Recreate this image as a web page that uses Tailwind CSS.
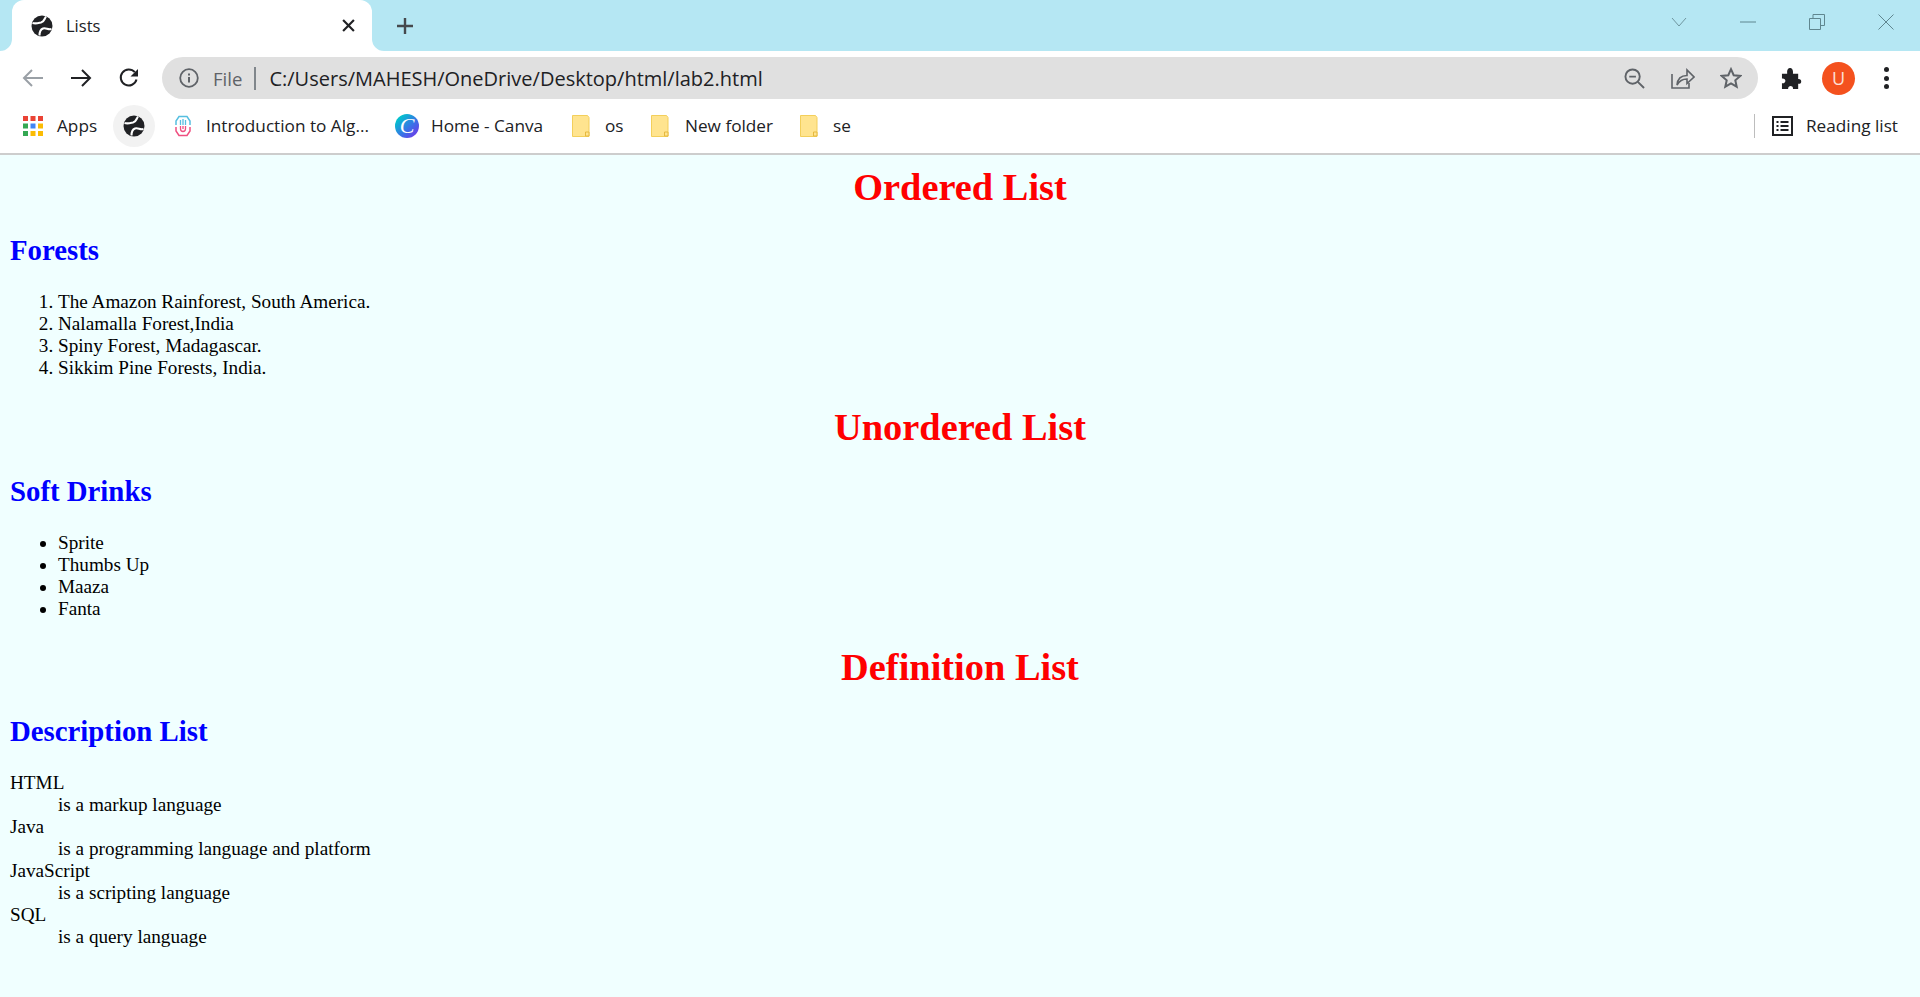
<!DOCTYPE html>
<html lang="en">
<head>
<meta charset="utf-8">
<title>Lists</title>
<script src="https://cdn.jsdelivr.net/npm/@tailwindcss/browser@4"></script>
</head>
<body class="bg-[#f0ffff] h-[997px] overflow-hidden font-['Liberation_Serif',serif] text-black">
<header class="font-['Open_Sans',sans-serif] text-[#202124]">
  <div class="h-[51px] bg-[#b5e7f3] flex items-stretch relative">
    <div class="ml-[12px] w-[360px] bg-white rounded-t-[12px] flex items-center relative pl-[19px] pr-[17px]">
      <svg class="absolute -left-[12px] bottom-0 w-[12px] h-[12px]" viewBox="0 0 12 12"><path d="M12 0v12H0A12 12 0 0 0 12 0z" fill="#fff"/></svg>
      <svg class="absolute -right-[12px] bottom-0 w-[12px] h-[12px]" viewBox="0 0 12 12"><path d="M0 0v12h12A12 12 0 0 1 0 0z" fill="#fff"/></svg>
      <svg class="w-[22px] h-[22px]" viewBox="0 0 22 22"><circle cx="11" cy="11" r="10.500" fill="#202124"/><path d="M15 1.500C13 4.500 13.500 6.500 10 7.500 7.500 8 5 9 1.500 8" fill="none" stroke="#fff" stroke-width="2.100"/><path d="M8.500 20.500C8.500 17 9.500 14.500 12 13.500 15 12.500 17 15 20.500 14" fill="none" stroke="#fff" stroke-width="2.100"/></svg>
      <span class="ml-[13px] pt-[2px] text-[16.500px]">Lists</span>
      <svg class="ml-auto w-[13px] h-[13px]" viewBox="0 0 12 12"><path d="M1 1l10 10M11 1L1 11" stroke="#202124" stroke-width="2"/></svg>
    </div>
    <svg class="ml-[24px] self-center w-[18px] h-[18px]" viewBox="0 0 18 18"><path d="M9 1v16M1 9h16" stroke="#45494d" stroke-width="2.400"/></svg>
    <div class="ml-auto flex items-center pb-[7px] pr-[26px]">
      <svg class="w-[16px] h-[10px]" viewBox="0 0 16 10"><path d="M1 1l7 8 7-8" fill="none" stroke="#6f969f" stroke-width="1"/></svg>
      <svg class="ml-[53px] w-[16px] h-[2px]" viewBox="0 0 16 2"><path d="M0 1h16" stroke="#5f868f" stroke-width="1"/></svg>
      <svg class="ml-[53px] w-[16px] h-[16px]" viewBox="0 0 16 16"><path d="M.5 4.500h11v11H.5zM4 4.500V.500h11.500v11h-4" fill="none" stroke="#5f868f" stroke-width="1"/></svg>
      <svg class="ml-[53px] w-[16px] h-[16px]" viewBox="0 0 16 16"><path d="M.5.500l15 15M15.500.500l-15 15" stroke="#5f868f" stroke-width="1"/></svg>
    </div>
  </div>
  <div class="h-[48px] bg-white flex items-center pt-[6px]">
    <svg class="ml-[22px] w-[22px] h-[20px]" viewBox="0 0 22 20"><path d="M21 10H2M10 2l-8 8 8 8" fill="none" stroke="#9aa0a6" stroke-width="2"/></svg>
    <svg class="ml-[26px] w-[22px] h-[20px]" viewBox="0 0 22 20"><path d="M1 10h19M12 2l8 8-8 8" fill="none" stroke="#202124" stroke-width="2"/></svg>
    <svg class="ml-[26px] w-[22px] h-[22px]" viewBox="0 0 22 22"><path d="M18.500 12.500A8 8 0 1 1 16.800 5.200" fill="none" stroke="#202124" stroke-width="2"/><path d="M20 2v7.500h-7.500z" fill="#202124"/></svg>
    <div class="ml-[22px] w-[1596px] h-[42px] rounded-full bg-[#e0e0e0] flex items-center pl-[17px] pr-[16px]">
      <svg class="w-[20px] h-[20px]" viewBox="0 0 20 20"><circle cx="10" cy="10" r="8.800" fill="none" stroke="#5f6368" stroke-width="1.800"/><path d="M10 9v5.500M10 5.500v2" stroke="#5f6368" stroke-width="2"/></svg>
      <span class="ml-[14px] pt-[2px] text-[18.600px] text-[#5f6368]">File</span>
      <span class="ml-[12px] w-[2px] h-[23px] bg-[#80868b]"></span>
      <span class="ml-[13px] pt-[2px] text-[20px] text-[#202124] leading-none">C:/Users/MAHESH/OneDrive/Desktop/html/lab2.html</span>
      <svg class="ml-auto w-[21px] h-[21px]" viewBox="0 0 22 22"><circle cx="9" cy="9" r="7.500" fill="none" stroke="#5f6368" stroke-width="2"/><path d="M5.500 9h7M14.500 14.500l6.500 6.500" stroke="#5f6368" stroke-width="2"/></svg>
      <svg class="ml-[26px] w-[24px] h-[22px]" viewBox="0 0 24 22"><path d="M1 7v14h17v-5" fill="none" stroke="#5f6368" stroke-width="1.600"/><path d="M6 18c.5-6 4-9.500 10-9.500V3l7 7-7 6.500V12c-4 0-7.500 1.500-10 6z" fill="none" stroke="#5f6368" stroke-width="1.600"/></svg>
      <svg class="ml-[25px] w-[22px] h-[22px]" viewBox="0 0 22 22"><path d="M11 2.200l2.700 6 6.500.7-4.900 4.400 1.400 6.400L11 16.400l-5.700 3.300 1.400-6.400L1.800 8.900l6.500-.7z" fill="none" stroke="#5f6368" stroke-width="2"/></svg>
    </div>
    <svg class="ml-[23px] w-[21px] h-[21px]" viewBox="0 0 22 22"><path d="M1 6h5.500C6 1 8 0 9.500 0S13 1 12.500 6H18v5.500c4.500-.5 4 6 0 5V22h-5.500c.8-4-5.500-4.500-5 0H1v-6c4 1 5.500-5.500 0-5z" fill="#202124"/></svg>
    <div class="ml-[20px] w-[33px] h-[33px] rounded-full bg-[#f4511e] text-[#fde0d6] text-[18px] flex items-center justify-center">U</div>
    <div class="ml-[29px] flex flex-col gap-[3.500px]"><i class="block w-[5px] h-[5px] rounded-full bg-[#202124]"></i><i class="block w-[5px] h-[5px] rounded-full bg-[#202124]"></i><i class="block w-[5px] h-[5px] rounded-full bg-[#202124]"></i></div>
  </div>
  <div class="h-[54px] bg-white flex items-center text-[17.200px] pb-[1px]">
    <svg class="ml-[23px] w-[20px] h-[20px]" viewBox="0 0 20 20"><g fill="#ea4335"><rect width="5" height="5"/><rect x="7.500" width="5" height="5"/><rect x="15" width="5" height="5"/></g><g fill="#34a853"><rect y="7.500" width="5" height="5"/><rect y="15" width="5" height="5"/></g><rect x="7.500" y="7.500" width="5" height="5" fill="#4285f4"/><rect x="15" y="7.500" width="5" height="5" fill="#fbbc04"/><rect x="7.500" y="15" width="5" height="5" fill="#fbbc04"/><rect x="15" y="15" width="5" height="5" fill="#fbbc04"/></svg>
    <span class="ml-[14px] w-[41px]">Apps</span>
    <div class="ml-[15px] w-[42px] h-[42px] rounded-full bg-[#f2f2f2] flex items-center justify-center">
      <svg class="w-[22px] h-[22px]" viewBox="0 0 22 22"><circle cx="11" cy="11" r="10.500" fill="#202124"/><path d="M15 1.500C13 4.500 13.500 6.500 10 7.500 7.500 8 5 9 1.500 8" fill="none" stroke="#fff" stroke-width="2.100"/><path d="M8.500 20.500C8.500 17 9.500 14.500 12 13.500 15 12.500 17 15 20.500 14" fill="none" stroke="#fff" stroke-width="2.100"/></svg>
    </div>
    <svg class="ml-[19px] w-[18px] h-[22px]" viewBox="0 0 18 22"><path d="M2 10V6l3-4.500h8L16 6v4" fill="none" stroke="#56bfe0" stroke-width="1.500"/><path d="M2 12v4l3 4.500h8l3-4.500v-4" fill="none" stroke="#ef4f80" stroke-width="1.500"/><path d="M6.500 5v5M11.500 5v5M9 4v6" fill="none" stroke="#56bfe0" stroke-width="1.300"/><path d="M6.500 11v3c0 3.300 5 3.300 5 0v-3M9 11v3" fill="none" stroke="#ef4f80" stroke-width="1.300"/></svg>
    <span class="ml-[14px] w-[164px] whitespace-nowrap">Introduction to Alg...</span>
    <div class="ml-[25px] w-[24px] h-[24px] rounded-full bg-[linear-gradient(135deg,#00c4cc_15%,#3d6ee8_60%,#7d2ae8)] flex items-center justify-center text-white font-['Liberation_Serif',serif] italic text-[22px] leading-none">C</div>
    <span class="ml-[12px] w-[113px] whitespace-nowrap">Home - Canva</span>
    <svg class="ml-[28px] w-[18px] h-[22px]" viewBox="0 0 18 22"><path d="M.5.500h15l1.500 2v19H.5z" fill="#ffe48f" stroke="#f3cf5b"/><path d="M13.500 21v-4h3.500v4z" fill="#ffe48f" stroke="#e6b93f"/></svg>
    <span class="ml-[15px] w-[17px]">os</span>
    <svg class="ml-[29px] w-[18px] h-[22px]" viewBox="0 0 18 22"><path d="M.5.500h15l1.500 2v19H.5z" fill="#ffe48f" stroke="#f3cf5b"/><path d="M13.500 21v-4h3.500v4z" fill="#ffe48f" stroke="#e6b93f"/></svg>
    <span class="ml-[16px] w-[87px] whitespace-nowrap">New folder</span>
    <svg class="ml-[28px] w-[18px] h-[22px]" viewBox="0 0 18 22"><path d="M.5.500h15l1.500 2v19H.5z" fill="#ffe48f" stroke="#f3cf5b"/><path d="M13.500 21v-4h3.500v4z" fill="#ffe48f" stroke="#e6b93f"/></svg>
    <span class="ml-[15px]">se</span>
    <span class="ml-auto w-[1px] h-[24px] bg-[#bdbdbd]"></span>
    <svg class="ml-[17px] w-[21px] h-[20px]" viewBox="0 0 21 20"><rect x="1" y="1" width="19" height="18" fill="none" stroke="#202124" stroke-width="2"/><path d="M4.500 6h2M8.500 6h8M4.500 10h2M8.500 10h8M4.500 14h2M8.500 14h8" stroke="#202124" stroke-width="2"/></svg>
    <span class="ml-[13px] mr-[22px] whitespace-nowrap">Reading list</span>
  </div>
  <div class="h-[2px] bg-[#cdcdcd]"></div>
</header>
<main class="px-[10px] pt-[10px]">
  <h1 class="text-[38.400px] leading-[44px] font-bold text-[#ff0000] text-center mb-[25px]">Ordered List</h1>
  <h2 class="text-[28.800px] leading-[33px] font-bold text-[#0000ff] mb-[24px]">Forests</h2>
  <ol class="list-decimal pl-[48px] text-[19.200px] leading-[22px]">
    <li>The Amazon Rainforest, South America.</li>
    <li>Nalamalla Forest,India</li>
    <li>Spiny Forest, Madagascar.</li>
    <li>Sikkim Pine Forests, India.</li>
  </ol>
  <h1 class="mt-[26px] text-[38.400px] leading-[44px] font-bold text-[#ff0000] text-center mb-[26px]">Unordered List</h1>
  <h2 class="text-[28.800px] leading-[33px] font-bold text-[#0000ff] mb-[24px]">Soft Drinks</h2>
  <ul class="list-disc pl-[48px] text-[19.200px] leading-[22px]">
    <li>Sprite</li>
    <li>Thumbs Up</li>
    <li>Maaza</li>
    <li>Fanta</li>
  </ul>
  <h1 class="mt-[25px] text-[38.400px] leading-[44px] font-bold text-[#ff0000] text-center mb-[26px]">Definition List</h1>
  <h2 class="text-[28.800px] leading-[33px] font-bold text-[#0000ff] mb-[24px]">Description List</h2>
  <dl class="text-[19.200px] leading-[22px]">
    <dt>HTML</dt><dd class="ml-[48px]">is a markup language</dd>
    <dt>Java</dt><dd class="ml-[48px]">is a programming language and platform</dd>
    <dt>JavaScript</dt><dd class="ml-[48px]">is a scripting language</dd>
    <dt>SQL</dt><dd class="ml-[48px]">is a query language</dd>
  </dl>
</main>
</body>
</html>
